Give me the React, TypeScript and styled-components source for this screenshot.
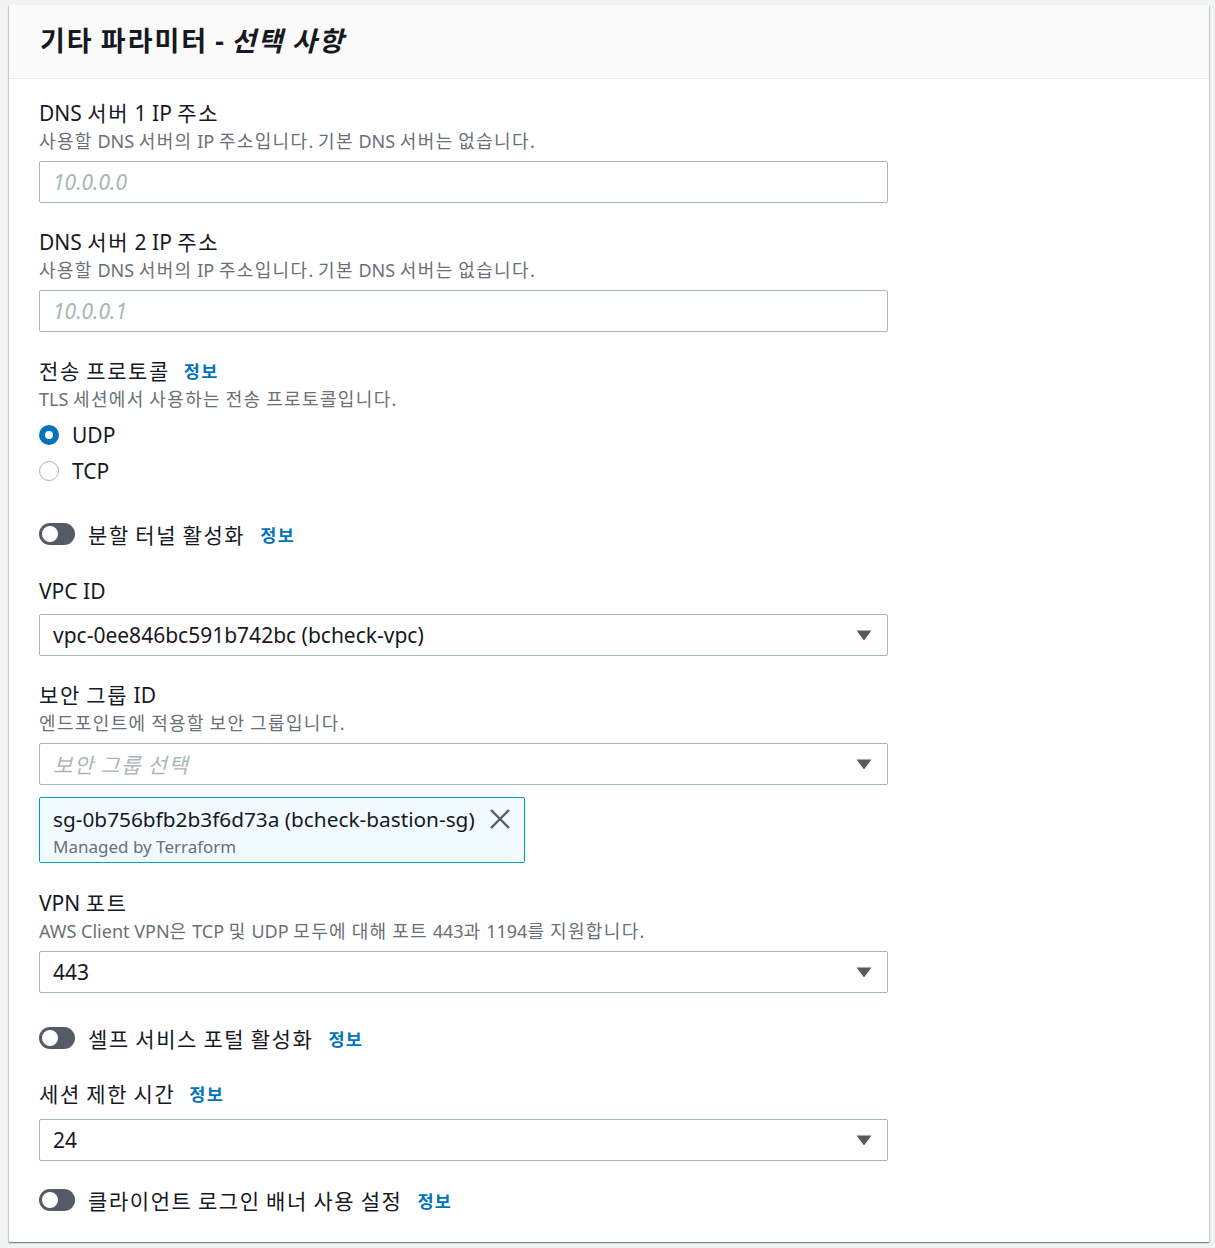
import React from 'react'
import styled, { createGlobalStyle } from 'styled-components'

const GlobalStyle = createGlobalStyle`
  html, body {
    margin: 0;
    padding: 0;
    background: #f2f3f3;
  }
  body {
    padding: 5px 6px 7px 9px;
    font-family: "Noto Sans", "Noto Sans CJK KR", sans-serif;
    color: #16191f;
  }
`

// hangul in the reference font runs a bit wider than Noto CJK's
const Hangul = styled.span`
  letter-spacing: 0.075em;
`

const T = ({ children }: { children: string }) => (
  <>
    {children.split(/([\uAC00-\uD7A3]+)/).map((part, i) =>
      /[\uAC00-\uD7A3]/.test(part) ? <Hangul key={i}>{part}</Hangul> : part
    )}
  </>
)

const Card = styled.section`
  background: #fff;
  box-shadow: 0 1px 1px 0 rgba(0, 28, 36, 0.3), 1px 1px 1px 0 rgba(0, 28, 36, 0.15),
    -1px 1px 1px 0 rgba(0, 28, 36, 0.15);
`

const Header = styled.header`
  height: 73px;
  display: flex;
  align-items: center;
  padding: 0 31px;
  background: #fafafa;
  border-bottom: 1px solid #eaeded;
`

const Title = styled.h2`
  margin: 0 0 2px;
  font-size: 27px;
  font-weight: 700;
  line-height: 32px;

  em {
    font-style: italic;
  }
`

const Body = styled.div`
  display: flex;
  flex-direction: column;
  padding: 20px 30px 24px 30px;
  width: 849px;
`

const Field = styled.div<{ $space?: number }>`
  display: flex;
  flex-direction: column;
  margin-top: ${p => (p.$space ?? 25)}px;
  &:first-child {
    margin-top: 0;
  }
`

const Label = styled.div`
  font-size: 21px;
  line-height: 28px;
  display: flex;
  align-items: center;
  gap: 14px;
`

const Info = styled.a`
  color: #0073bb;
  font-weight: 700;
  font-size: 17.5px;
  text-decoration: none;
  cursor: pointer;
`

const Desc = styled.div`
  font-size: 18px;
  line-height: 28px;
  color: #687078;
`

const Input = styled.input`
  box-sizing: border-box;
  margin-top: 6px;
  height: 42px;
  width: 100%;
  padding: 0 13px;
  border: 1px solid #aab7b8;
  border-radius: 2px;
  font-family: inherit;
  font-size: 21px;
  color: #16191f;
  outline: none;

  &::placeholder {
    color: #aab7b8;
    font-style: italic;
  }
`

const Select = styled.div<{ $gap?: number }>`
  box-sizing: border-box;
  margin-top: ${p => p.$gap ?? 6}px;
  height: 42px;
  display: flex;
  align-items: center;
  justify-content: space-between;
  padding: 0 15px 0 13px;
  border: 1px solid #aab7b8;
  border-radius: 2px;
  font-size: 21px;
`

const Placeholder = styled.span`
  color: #aab7b8;
  font-style: italic;
`

const Caret = () => (
  <svg width="16" height="11" viewBox="0 0 16 11">
    <path d="M0.5 0.5 H15.5 L8 10.5 Z" fill="#545b64" />
  </svg>
)

const RadioGroup = styled.div`
  display: flex;
  flex-direction: column;
  margin-top: 4px;
`

const RadioRow = styled.label`
  display: flex;
  align-items: center;
  gap: 13px;
  height: 36px;
  font-size: 21px;
`

const RadioDot = styled.span<{ $checked?: boolean }>`
  box-sizing: border-box;
  width: 20px;
  height: 20px;
  border-radius: 50%;
  background: #fff;
  border: ${p => (p.$checked ? '6px solid #0073bb' : '1.5px solid #aab7b8')};
`

const ToggleRow = styled.div<{ $space?: number }>`
  display: flex;
  align-items: center;
  gap: 13px;
  height: 36px;
  margin-top: ${p => p.$space ?? 25}px;
  font-size: 21px;

  ${Info} {
    margin-left: 2px;
  }
`

const Toggle = styled.span`
  position: relative;
  width: 36px;
  height: 22px;
  border-radius: 11px;
  background: #545b64;

  &::after {
    content: '';
    position: absolute;
    left: 3px;
    top: 3px;
    width: 16px;
    height: 16px;
    border-radius: 50%;
    background: #fff;
  }
`

const Token = styled.div`
  box-sizing: border-box;
  margin-top: 12px;
  align-self: flex-start;
  width: 486px;
  height: 66px;
  padding: 6px 13px 0 13px;
  background: #f1faff;
  border: 1px solid #00a1c9;
  border-radius: 2px;
  display: flex;
  justify-content: space-between;
`

const TokenText = styled.div`
  display: flex;
  flex-direction: column;
`

const TokenName = styled.div`
  font-size: 20.8px;
  line-height: 30px;
`

const TokenSub = styled.div`
  font-size: 17px;
  line-height: 26px;
  color: #687078;
`

const Dismiss = styled.button`
  border: none;
  background: none;
  padding: 0;
  margin-top: 4px;
  height: 22px;
  cursor: pointer;
`

const CloseIcon = () => (
  <svg width="22" height="22" viewBox="0 0 22 22">
    <path d="M2 2 L20 20 M20 2 L2 20" stroke="#545b64" strokeWidth="2.4" fill="none" />
  </svg>
)

export default function App() {
  return (
    <>
      <GlobalStyle />
      <Card>
        <Header>
          <Title>
            <T>기타 파라미터 - </T>
            <em>
              <T>선택 사항</T>
            </em>
          </Title>
        </Header>
        <Body>
          <Field>
            <Label>
              <span><T>DNS 서버 1 IP 주소</T></span>
            </Label>
            <Desc><T>사용할 DNS 서버의 IP 주소입니다. 기본 DNS 서버는 없습니다.</T></Desc>
            <Input placeholder="10.0.0.0" />
          </Field>
          <Field>
            <Label>
              <span><T>DNS 서버 2 IP 주소</T></span>
            </Label>
            <Desc><T>사용할 DNS 서버의 IP 주소입니다. 기본 DNS 서버는 없습니다.</T></Desc>
            <Input placeholder="10.0.0.1" />
          </Field>
          <Field>
            <Label>
              <span><T>전송 프로토콜</T></span>
              <Info><T>정보</T></Info>
            </Label>
            <Desc><T>TLS 세션에서 사용하는 전송 프로토콜입니다.</T></Desc>
            <RadioGroup>
              <RadioRow>
                <RadioDot $checked />
                UDP
              </RadioRow>
              <RadioRow>
                <RadioDot />
                TCP
              </RadioRow>
            </RadioGroup>
          </Field>
          <ToggleRow $space={27}>
            <Toggle />
            <span><T>분할 터널 활성화</T></span>
            <Info><T>정보</T></Info>
          </ToggleRow>
          <Field>
            <Label>VPC ID</Label>
            <Select $gap={9}>
              vpc-0ee846bc591b742bc (bcheck-vpc)
              <Caret />
            </Select>
          </Field>
          <Field>
            <Label>
              <span><T>보안 그룹 ID</T></span>
            </Label>
            <Desc><T>엔드포인트에 적용할 보안 그룹입니다.</T></Desc>
            <Select>
              <Placeholder><T>보안 그룹 선택</T></Placeholder>
              <Caret />
            </Select>
            <Token>
              <TokenText>
                <TokenName>sg-0b756bfb2b3f6d73a (bcheck-bastion-sg)</TokenName>
                <TokenSub>Managed by Terraform</TokenSub>
              </TokenText>
              <Dismiss aria-label="제거">
                <CloseIcon />
              </Dismiss>
            </Token>
          </Field>
          <Field $space={26}>
            <Label>
              <span><T>VPN 포트</T></span>
            </Label>
            <Desc><T>AWS Client VPN은 TCP 및 UDP 모두에 대해 포트 443과 1194를 지원합니다.</T></Desc>
            <Select>
              443
              <Caret />
            </Select>
          </Field>
          <ToggleRow $space={27}>
            <Toggle />
            <span><T>셀프 서비스 포털 활성화</T></span>
            <Info><T>정보</T></Info>
          </ToggleRow>
          <Field $space={24}>
            <Label>
              <span><T>세션 제한 시간</T></span>
              <Info><T>정보</T></Info>
            </Label>
            <Select $gap={11}>
              24
              <Caret />
            </Select>
          </Field>
          <ToggleRow $space={21}>
            <Toggle />
            <span><T>클라이언트 로그인 배너 사용 설정</T></span>
            <Info><T>정보</T></Info>
          </ToggleRow>
        </Body>
      </Card>
    </>
  )
}
